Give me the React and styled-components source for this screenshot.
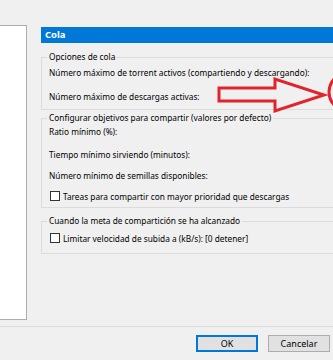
import React from 'react'
import styled, { createGlobalStyle } from 'styled-components'

const GlobalStyle = createGlobalStyle`
  html, body {
    margin: 0;
    padding: 0;
    background: #f0f0f0;
    overflow: hidden;
  }
  body {
    font-family: "Noto Sans", "Open Sans", sans-serif;
    font-size: 8.3px;
    color: #000;
  }
`

const Window = styled.div`
  position: relative;
  width: 333px;
  height: 360px;
  overflow: hidden;
  background: #f0f0f0;
`

const Main = styled.div`
  display: flex;
  align-items: flex-start;
  padding-top: 25px;
`

const SideList = styled.div`
  flex: none;
  width: 26px;
  height: 293px;
  background: #fff;
  border: 1px solid #adadad;
  border-left: none;
`

const Pane = styled.div`
  flex: none;
  width: 320px;
  margin-left: 14px;
  margin-top: 2px;
`

const Header = styled.div`
  height: 16px;
  background: #0078d7;
  color: #fff;
  font-weight: bold;
  font-size: 9.5px;
  line-height: 16px;
  padding-left: 4px;
`

const Group = styled.fieldset`
  margin: ${p => p.$top}px 0 0 0;
  padding: 0 0 ${p => p.$bottom}px 7px;
  border: 1px solid #dcdcdc;
  min-width: 0;
`

const Legend = styled.legend`
  margin-left: -2px;
  padding: 0 2px;
  line-height: 12px;
`

const Row = styled.div`
  display: flex;
  align-items: center;
  gap: 3px;
  height: 14px;
  margin-top: ${p => p.$gap || 0}px;
  white-space: nowrap;
`

const Box = styled.span`
  flex: none;
  width: 8px;
  height: 8px;
  margin-left: 1px;
  background: #fff;
  border: 1px solid #333;
`

const Footer = styled.div`
  margin-top: 6px;
  border-top: 1px solid #dadada;
  display: flex;
  justify-content: flex-end;
  gap: 10px;
  padding: 8px 3px 0 0;
`

const Button = styled.button`
  width: 62px;
  height: 17px;
  padding: 0;
  font: inherit;
  font-size: 9px;
  color: #000;
  background: #e1e1e1;
  border: ${p => (p.$focused ? '2px solid #0078d7' : '1px solid #adadad')};
`

const Overlay = styled.svg`
  position: absolute;
  left: 0;
  top: 0;
  pointer-events: none;
`

export default function App() {
  return (
    <Window>
      <GlobalStyle />
      <Main>
        <SideList />
        <Pane>
          <Header>Cola</Header>
          <Group $top={8} $bottom={6}>
            <Legend>Opciones de cola</Legend>
            <Row $gap={2}>Número máximo de torrent activos (compartiendo y descargando):</Row>
            <Row $gap={10}>Número máximo de descargas activas:</Row>
          </Group>
          <Group $top={2} $bottom={4}>
            <Legend>Configurar objetivos para compartir (valores por defecto)</Legend>
            <Row>Ratio mínimo (%):</Row>
            <Row $gap={9}>Tiempo mínimo sirviendo (minutos):</Row>
            <Row $gap={7}>Número mínimo de semillas disponibles:</Row>
            <Row $gap={7}>
              <Box />
              Tareas para compartir con mayor prioridad que descargas
            </Row>
          </Group>
          <Group $top={7} $bottom={8}>
            <Legend>Cuando la meta de compartición se ha alcanzado</Legend>
            <Row $gap={4}>
              <Box />
              Limitar velocidad de subida a (kB/s): [0 detener]
            </Row>
          </Group>
        </Pane>
      </Main>
      <Footer>
        <Button $focused>OK</Button>
        <Button>Cancelar</Button>
      </Footer>
      <Overlay width="333" height="360" viewBox="0 0 333 360">
        <polygon
          points="219,88 275,88 275,79 324,95 275,111 275,101 219,101"
          fill="none"
          stroke="#e0242c"
          strokeWidth="3"
          strokeLinejoin="miter"
        />
        <circle cx="348" cy="92" r="19" fill="none" stroke="#e0242c" strokeWidth="3" />
      </Overlay>
    </Window>
  )
}
